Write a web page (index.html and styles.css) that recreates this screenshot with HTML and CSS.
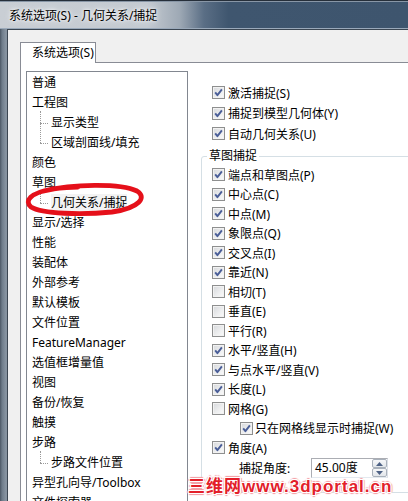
FILE: index.html
```html
<!DOCTYPE html>
<html lang="zh-CN">
<head>
<meta charset="utf-8">
<title>系统选项</title>
<link rel="stylesheet" href="styles.css">
</head>
<body>
<svg class="defs" width="0" height="0" aria-hidden="true">
  <symbol id="chk" viewBox="0 0 11 11">
    <path d="M2.2 5.4 L4.4 8.2 L8.9 2.3" fill="none" stroke="#4a5e98" stroke-width="1.9" stroke-linejoin="round"/>
  </symbol>
</svg>
<div class="win">
  <div class="titlebar"><span class="title">系统选项(S) - 几何关系/捕捉</span></div>
  <div class="main">
    <div class="frame-left"></div>
    <div class="client">
      <div class="tabs"><div class="tab">系统选项(S)</div></div>
      <div class="panel">
        <ul class="tree">
          <li>普通</li>
          <li>工程图</li>
          <li class="child first">显示类型</li>
          <li class="child">区域剖面线/填充</li>
          <li>颜色</li>
          <li>草图</li>
          <li class="child first"><span class="sel">几何关系/捕捉</span></li>
          <li>显示/选择</li>
          <li>性能</li>
          <li>装配体</li>
          <li>外部参考</li>
          <li>默认模板</li>
          <li>文件位置</li>
          <li>FeatureManager</li>
          <li>选值框增量值</li>
          <li>视图</li>
          <li>备份/恢复</li>
          <li>触摸</li>
          <li>步路</li>
          <li class="child first">步路文件位置</li>
          <li>异型孔向导/Toolbox</li>
          <li>文件探索器</li>
        </ul>
        <div class="opts">
          <div class="row top"><span class="cb"><svg><use href="#chk"/></svg></span><span>激活捕捉(S)</span></div>
          <div class="row top"><span class="cb"><svg><use href="#chk"/></svg></span><span>捕捉到模型几何体(Y)</span></div>
          <div class="row top"><span class="cb"><svg><use href="#chk"/></svg></span><span>自动几何关系(U)</span></div>
          <fieldset class="group">
            <legend>草图捕捉</legend>
            <div class="row"><span class="cb"><svg><use href="#chk"/></svg></span><span>端点和草图点(P)</span></div>
            <div class="row"><span class="cb"><svg><use href="#chk"/></svg></span><span>中心点(C)</span></div>
            <div class="row"><span class="cb"><svg><use href="#chk"/></svg></span><span>中点(M)</span></div>
            <div class="row"><span class="cb"><svg><use href="#chk"/></svg></span><span>象限点(Q)</span></div>
            <div class="row"><span class="cb"><svg><use href="#chk"/></svg></span><span>交叉点(I)</span></div>
            <div class="row"><span class="cb"><svg><use href="#chk"/></svg></span><span>靠近(N)</span></div>
            <div class="row"><span class="cb"></span><span>相切(T)</span></div>
            <div class="row"><span class="cb"></span><span>垂直(E)</span></div>
            <div class="row"><span class="cb"></span><span>平行(R)</span></div>
            <div class="row"><span class="cb"><svg><use href="#chk"/></svg></span><span>水平/竖直(H)</span></div>
            <div class="row"><span class="cb"><svg><use href="#chk"/></svg></span><span>与点水平/竖直(V)</span></div>
            <div class="row"><span class="cb"><svg><use href="#chk"/></svg></span><span>长度(L)</span></div>
            <div class="row"><span class="cb"></span><span>网格(G)</span></div>
            <div class="row sub"><span class="cb"><svg><use href="#chk"/></svg></span><span>只在网格线显示时捕捉(W)</span></div>
            <div class="row"><span class="cb"><svg><use href="#chk"/></svg></span><span>角度(A)</span></div>
            <div class="spinrow">
              <span class="lbl">捕捉角度:</span>
              <div class="spin">
                <span class="val">45.00度</span>
                <div class="btns">
                  <span class="btn"><svg viewBox="0 0 7 4"><path d="M0 4 L3.5 0 L7 4 Z" fill="#4d6185"/></svg></span>
                  <span class="btn"><svg viewBox="0 0 7 4"><path d="M0 0 L3.5 4 L7 0 Z" fill="#4d6185"/></svg></span>
                </div>
              </div>
            </div>
          </fieldset>
        </div>
      </div>
    </div>
  </div>
  <svg class="mark" viewBox="0 0 408 501" width="408" height="501" aria-hidden="true">
    <path d="M44 191 C72 184 120 183 137 191 C147 197 140 208 112 212 C82 215 42 214 31 207 C24 201 30 193 52 189 C60 188 70 187 78 187" fill="none" stroke="#e5101a" stroke-width="4.8" stroke-linecap="round"/>
  </svg>
  <div class="wm">三维网www.3dportal.cn</div>
</div>
</body>
</html>
```
FILE: styles.css
```css
* { box-sizing: border-box; }
html, body { margin: 0; padding: 0; }
body {
  width: 408px;
  height: 501px;
  overflow: hidden;
  font-family: "Noto Sans", "Noto Sans CJK SC", sans-serif;
  font-size: 12px;
  color: #000;
  background: #f0f0f0;
}
.defs { position: absolute; }
.win { position: relative; width: 408px; height: 501px; overflow: hidden; }

.titlebar {
  height: 29px;
  border-top: 1px solid #262f3a;
  background: linear-gradient(to right, #c9ced4 0, #c4cad1 36%, #9ea9b5 44%, #5a6e85 50%, #3f566f 56%, #3e556e 100%);
  box-shadow: inset 0 1px 0 #8896a6, inset 0 -1px 0 #9aa9ba;
  display: flex;
  align-items: center;
  padding-left: 9px;
}
.title { text-shadow: 0 0 6px #fff, 0 0 3px #fff; }

.main { display: flex; height: 472px; }
.frame-left {
  width: 8px;
  flex: none;
  background: linear-gradient(to right, #4c5764 0, #6f7c8a 30%, #86929f 80%);
  border-right: 1px solid #3c4651;
}
.client {
  flex: 1;
  background: #f0f0f0;
  border-top: 1px solid #3b4652;
  padding: 12px 0 0 12px;
  min-width: 0;
}
.tabs { display: flex; position: relative; z-index: 1; }
.tab {
  width: 76px;
  height: 21px;
  margin-bottom: -1px;
  border: 1px solid #898c95;
  border-bottom: 0;
  background: #fff;
  padding-left: 11px;
  line-height: 19px;
}
.panel {
  display: flex;
  align-items: flex-start;
  height: 460px;
  border-top: 1px solid #898c95;
  border-left: 1px solid #898c95;
  background: #fff;
  padding: 8px 0 0 5px;
}

.tree {
  list-style: none;
  margin: 0;
  padding: 1px 0 0 5px;
  width: 162px;
  height: 460px;
  flex: none;
  border: 1px solid #828790;
}
.tree li { height: 20px; line-height: 20px; white-space: nowrap; }
.tree li.child { position: relative; padding-left: 19px; }
.tree li.child::before {
  content: "";
  position: absolute;
  left: 8px;
  top: 10px;
  width: 8px;
  border-top: 1px dotted #9a9a9a;
}
.tree li.child::after {
  content: "";
  position: absolute;
  left: 8px;
  top: -10px;
  height: 20px;
  border-left: 1px dotted #9a9a9a;
}
.tree li.child.first::after { top: -2px; height: 12px; }
.sel { background: #f3f3f3; }

.opts { flex: none; width: 300px; margin-left: 13px; padding-top: 11.5px; }
.row {
  display: flex;
  align-items: center;
  gap: 3px;
  height: 19.5px;
  white-space: nowrap;
}
.row.top { height: 20.5px; padding-left: 11px; }
.row.sub { padding-left: 28px; gap: 2px; }

.cb {
  position: relative;
  width: 13px;
  height: 13px;
  flex: none;
  border: 1px solid #8e8f8f;
  background: linear-gradient(135deg, #d6d8db 0, #eeeff0 60%, #fbfbfb 100%);
  box-shadow: inset 0 0 0 1px #f2f2f2;
}
.cb svg { display: block; width: 11px; height: 11px; }

.group {
  margin: 4px 0 0 0;
  padding: 0 0 13px 10px;
  border: 1px solid #d5dfe5;
  border-radius: 3px;
  min-width: 0;
}
.group legend {
  padding: 0 2px;
  margin-left: -5px;
  line-height: 16px;
  height: 16px;
  margin-bottom: 1px;
}
.spinrow {
  display: flex;
  align-items: center;
  height: 21px;
  padding-left: 27px;
}
.lbl { width: 72px; flex: none; }
.spin {
  display: flex;
  width: 77px;
  height: 20px;
  border: 1px solid #abadb3;
  border-right-color: #dbdfe6;
  border-bottom-color: #e3e9ef;
  background: #fff;
}
.val { flex: 1; padding-left: 3px; line-height: 18px; }
.btns { width: 15px; display: flex; flex-direction: column; }
.btn {
  flex: 1;
  display: flex;
  align-items: center;
  justify-content: center;
  border: 1px solid #a9b1bb;
  border-radius: 2px;
  background: linear-gradient(#f6f7f9, #e2e6ea);
}
.btn svg { width: 7px; height: 4px; display: block; }

.mark { position: absolute; left: 0; top: 0; pointer-events: none; }

.wm {
  position: absolute;
  left: 188px;
  top: 477px;
  line-height: 20px;
  font-family: "Liberation Sans", "Noto Sans CJK SC", sans-serif;
  font-weight: bold;
  font-size: 17px;
  letter-spacing: 1px;
  color: #e3202a;
  white-space: nowrap;
  text-shadow:
    1px 0 0 #fff, -1px 0 0 #fff, 0 1px 0 #fff, 0 -1px 0 #fff,
    1px 1px 0 #fff, -1px -1px 0 #fff, 1px -1px 0 #fff, -1px 1px 0 #fff,
    2px 0 1px #f39aa0, -2px 0 1px #f39aa0, 0 2px 1px #f39aa0, 0 -2px 1px #f39aa0;
}
```
